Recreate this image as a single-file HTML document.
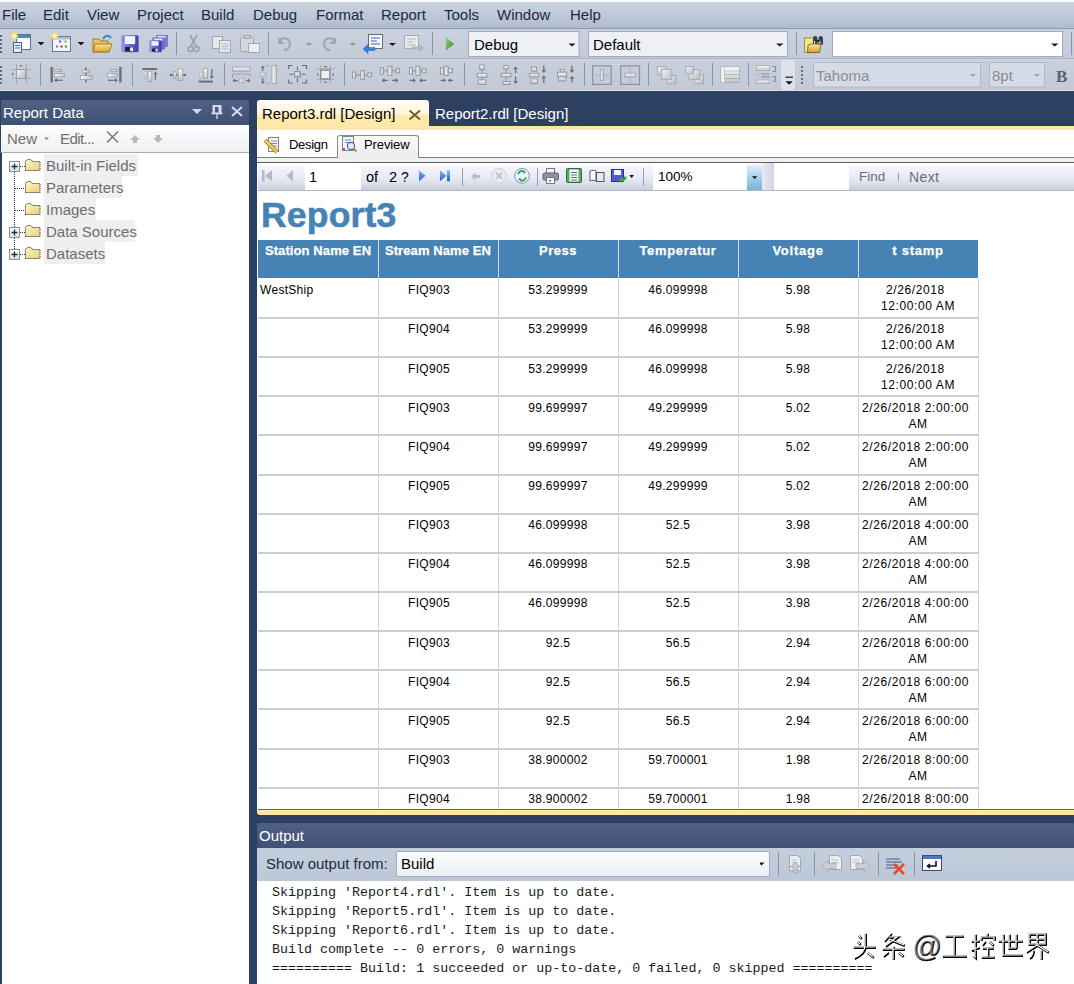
<!DOCTYPE html>
<html><head><meta charset="utf-8">
<style>
*{margin:0;padding:0;box-sizing:border-box}
html,body{width:1074px;height:984px;overflow:hidden}
body{position:relative;background:#2e4062;font-family:"Liberation Sans",sans-serif;font-size:15px;color:#1e2a3c}
.a{position:absolute}
.t{position:absolute;white-space:nowrap;line-height:1}
#menubar{left:0;top:0;width:1074px;height:29px;background:linear-gradient(#fbfcfd 0,#fbfcfd 1.8px,#c9ced6 2px,#cad3df 3px,#c0c9d8 15px,#b0bbd0 27.8px,#8f9aae 28px,#8f9aae 29px)}
#tb1{left:0;top:29px;width:1074px;height:30px;background:linear-gradient(#c6d0df 0,#c9d1de 3px,#c3cbd9 100%);border-bottom:1px solid #a9b3c4}
#tb2{left:0;top:59px;width:1074px;height:32px;background:linear-gradient(#d3d9e4 0,#c9d0dc 2px,#c2cad8 100%);border-bottom:1px solid #d9dee7}
.ptitle{background:linear-gradient(#4f6185,#3f5074);border-radius:2px 2px 0 0;color:#fff}
/* doc */
#tab1{left:257px;top:100px;width:172px;height:30px;border-radius:3px 3px 0 0;background:linear-gradient(#fffdf6 0,#fff6da 14px,#ffe9ab 15px,#ffe8a6 30px)}
#band{left:257px;top:126px;width:817px;height:4.7px;background:#ffe8a6}
#docbody{left:257px;top:130px;width:817px;height:680px;background:#fff;overflow:hidden}
#surf{left:258px;top:191px;width:816px;height:619px;background:#fff}
#clip{left:0;top:0;width:1074px;height:810px;overflow:hidden}
.hl{position:absolute;left:258px;width:721px;height:2px;background:#cdcdcd}
.vl{position:absolute;top:278px;width:1px;height:540px;background:#d3d3d3}
.c{position:absolute;width:120px;text-align:center;font-size:12px;line-height:16px;letter-spacing:0.3px;color:#000;white-space:nowrap}
.hd{position:absolute;top:242.5px;-webkit-text-stroke:0.25px #fff;width:120px;text-align:center;font:bold 13px "Liberation Sans";line-height:16px;color:#fff;white-space:nowrap}
#band2{left:257px;top:810px;width:817px;height:5px;background:#ffe8a6;border-radius:0 0 0 3px}
/* output */
#otitle{left:257px;top:823px;width:817px;height:25px}
#otool{left:257px;top:848px;width:817px;height:33px;background:linear-gradient(#c4cedc,#bcc7d8)}
#otext{left:257px;top:881px;width:817px;height:103px;background:#fff}
.mono{position:absolute;left:272px;font:13.35px "Liberation Mono",monospace;line-height:19.05px;white-space:pre;color:#1a1a1a}
</style></head><body>
<div id="menubar" class="a">
  <span class="t" style="left:2px;top:7px">File</span>
  <span class="t" style="left:43px;top:7px">Edit</span>
  <span class="t" style="left:87px;top:7px">View</span>
  <span class="t" style="left:137px;top:7px">Project</span>
  <span class="t" style="left:201px;top:7px">Build</span>
  <span class="t" style="left:253px;top:7px">Debug</span>
  <span class="t" style="left:316px;top:7px">Format</span>
  <span class="t" style="left:381px;top:7px">Report</span>
  <span class="t" style="left:444px;top:7px">Tools</span>
  <span class="t" style="left:497px;top:7px">Window</span>
  <span class="t" style="left:570px;top:7px">Help</span>
</div>
<div id="tb1" class="a"></div>
<div id="tb2" class="a"></div>
<svg class="a" style="left:0;top:28px" width="1074" height="31" viewBox="0 28 1074 31">
 <defs>
  <linearGradient id="gg" x1="0" y1="0" x2="0" y2="1"><stop offset="0" stop-color="#e4e4e4"/><stop offset="1" stop-color="#a9a9a9"/></linearGradient>
  <linearGradient id="flp" x1="0" y1="0" x2="1" y2="0"><stop offset="0" stop-color="#9a9aea"/><stop offset=".5" stop-color="#6262cc"/><stop offset="1" stop-color="#40409e"/></linearGradient>
  <linearGradient id="fold2" x1="0" y1="0" x2="0" y2="1"><stop offset="0" stop-color="#fbe59a"/><stop offset="1" stop-color="#d9a22c"/></linearGradient>
  <linearGradient id="play" x1="0" y1="0" x2="1" y2="1"><stop offset="0" stop-color="#8fd27a"/><stop offset="1" stop-color="#2f8a2a"/></linearGradient>
 </defs>
 <g fill="#5e6a80"><rect x="0" y="35" width="2" height="2"/><rect x="0" y="39" width="2" height="2"/><rect x="0" y="43" width="2" height="2"/><rect x="0" y="47" width="2" height="2"/><rect x="0" y="51" width="2" height="2"/></g>
 <!-- new project -->
 <rect x="16.5" y="34.5" width="14" height="15" fill="#fbfcfe" stroke="#5a6f93"/>
 <rect x="17" y="35" width="13" height="3" fill="#4e86d6"/>
 <rect x="13.5" y="42.5" width="8" height="10" fill="#e3ecf8" stroke="#4a5f86"/>
 <path d="M15 45.5h5M15 48h5" stroke="#3f6fc0" stroke-width="1.2"/>
 <path d="M14.5 32v8M10.5 36h8M11.7 33.2l5.6 5.6M17.3 33.2l-5.6 5.6" stroke="#ffe35a" stroke-width="1.3"/>
 <circle cx="14.5" cy="36" r="2" fill="#fff6b0"/>
 <path d="M37.5 42h7l-3.5 3.5z" fill="#1a1a1a"/>
 <!-- add item -->
 <rect x="52.5" y="36.5" width="18" height="15" fill="#f4f6fa" stroke="#6a7794"/>
 <rect x="53" y="37" width="17" height="2.5" fill="#a9bfe0"/>
 <circle cx="60" cy="41.5" r="1.2" fill="#4a78c8"/><circle cx="65.5" cy="41.5" r="1.2" fill="#e39845"/>
 <circle cx="57" cy="46.5" r="1.2" fill="#4a9ad8"/><circle cx="61.5" cy="46.5" r="1.2" fill="#d84a4a"/><circle cx="66" cy="46.5" r="1.2" fill="#3aa84a"/>
 <path d="M54.5 32v8M50.5 36h8M51.7 33.2l5.6 5.6M57.3 33.2l-5.6 5.6" stroke="#ffe35a" stroke-width="1.3"/>
 <circle cx="54.5" cy="36" r="2" fill="#fff6b0"/>
 <path d="M77.5 42h7l-3.5 3.5z" fill="#1a1a1a"/>
 <!-- open -->
 <path d="M93 39h6l2 2h7v11h-15z" fill="#e8c563" stroke="#9c7a2a"/>
 <path d="M95 44h17l-3 8h-16z" fill="url(#fold2)" stroke="#a17d25"/>
 <path d="M103 39c2-4 6-4 8-1" stroke="#4a78c8" stroke-width="2" fill="none"/>
 <!-- save -->
 <rect x="121.2" y="35.2" width="17.4" height="17.1" rx="1.5" fill="url(#flp)"/>
 <rect x="124.8" y="36.1" width="10.4" height="8" fill="#f2f5fc"/>
 <rect x="125" y="47" width="6" height="4.5" fill="#1e1e50"/><rect x="130" y="47.5" width="3" height="3.5" fill="#e8e8f0"/>
 <!-- save all -->
 <rect x="156" y="35" width="12" height="12" rx="1" fill="#7a7ad6"/>
 <rect x="157.5" y="36" width="8" height="2.5" fill="#e4e8f8"/>
 <rect x="152.5" y="37.5" width="12.5" height="12" rx="1" fill="#6c6cd0"/>
 <rect x="154" y="38.5" width="8.5" height="2.5" fill="#e4e8f8"/>
 <rect x="149.2" y="40.2" width="12.6" height="12.1" rx="1" fill="url(#flp)"/>
 <rect x="151.5" y="41.2" width="7" height="4.5" fill="#f2f5fc"/>
 <rect x="152" y="48.5" width="4" height="3" fill="#1e1e50"/><rect x="155.5" y="48.8" width="2" height="2.5" fill="#e8e8f0"/>
 <path d="M176.5 32v23" stroke="#8a94a6"/>
 <!-- cut -->
 <path d="M190 35l6 11M197 35l-6 11" stroke="#9aa0a8" stroke-width="1.6"/>
 <circle cx="190.5" cy="49" r="2.5" fill="none" stroke="#9aa0a8" stroke-width="1.4"/><circle cx="196.5" cy="49" r="2.5" fill="none" stroke="#9aa0a8" stroke-width="1.4"/>
 <!-- copy -->
 <rect x="212.5" y="36.5" width="10" height="12" fill="#e6e8ec" stroke="#a4a8ae"/>
 <rect x="219.5" y="40.5" width="11" height="12" fill="#e6e8ec" stroke="#a4a8ae"/>
 <path d="M221.5 44h7M221.5 46.5h7M221.5 49h7" stroke="#b4b8be"/>
 <!-- paste -->
 <rect x="240.5" y="37.5" width="13" height="14" rx="1" fill="#d4d7dc" stroke="#a4a8ae"/>
 <rect x="244" y="35.5" width="6" height="3" fill="#c8cbd0" stroke="#a4a8ae"/>
 <rect x="248.5" y="43.5" width="11" height="9" fill="#eceef1" stroke="#a4a8ae"/>
 <path d="M268.5 32v23" stroke="#8a94a6"/>
 <!-- undo -->
 <path d="M280 40c5-4 10-1 10 4s-4 6-6 6" stroke="#a2a8b0" stroke-width="2.2" fill="none"/>
 <path d="M278 37v7h7z" fill="#a2a8b0"/>
 <path d="M305.5 43h6.5l-3.25 3z" fill="#8f96a3"/>
 <!-- redo -->
 <path d="M334 40c-5-4-10-1-10 4s4 6 6 6" stroke="#a2a8b0" stroke-width="2.2" fill="none"/>
 <path d="M336 37v7h-7z" fill="#a2a8b0"/>
 <path d="M349.5 43h6.5l-3.25 3z" fill="#8f96a3"/>
 <!-- nav back -->
 <rect x="368.5" y="34.5" width="14" height="14" fill="#f8f8fa" stroke="#6a6a6a"/>
 <path d="M371 38h9M371 41h6M371 44h9" stroke="#3a5fc8" stroke-width="1.2"/>
 <path d="M363 49l5-4.5v3h7v3h-7v3z" fill="#3a7ee0" stroke="#2a5fb0" stroke-width=".5"/>
 <path d="M389 43h7l-3.5 3z" fill="#1a1a1a"/>
 <!-- nav fwd -->
 <rect x="404.5" y="35.5" width="14" height="13" fill="#e9eaec" stroke="#a8acb2"/>
 <path d="M407 39h9M407 42h6M407 45h9" stroke="#b5b9bf" stroke-width="1.2"/>
 <path d="M424 48l-5-4.5v3h-7v3h7v3z" fill="#b2b6bc"/>
 <path d="M432.5 32v23" stroke="#8a94a6"/>
 <path d="M446 37.2l8.2 6.7-8.2 6.7z" fill="url(#play)"/>
 <!-- combos -->
 <rect x="468.5" y="31.5" width="110.5" height="25" fill="#eff1f7" stroke="#a3abbb"/>
 <path d="M568.5 43.6h7l-3.5 3z" fill="#1a1a1a"/>
 <rect x="588.5" y="31.5" width="199" height="25" fill="#eef0f6" stroke="#a3abbb"/>
 <path d="M776 43.6h7.5l-3.75 3z" fill="#1a1a1a"/>
 <path d="M796.5 32v23" stroke="#8a94a6"/>
 <!-- find in files -->
 <rect x="804.5" y="38" width="12" height="14.5" fill="#f6e68a" stroke="#8c7a3a" stroke-width=".8"/>
 <path d="M808 45l3-1h10l-1.5 8.5h-12z" fill="url(#fold2)" stroke="#6a5a20" stroke-width=".8"/>
 <path d="M813 38.5c0-2 1.5-2.5 2.5-2.5s2 1 2 3v5h-4.5z M818.5 38.5c0-2 1.5-2.5 2.5-2.5s2 1 2 3v5.5h-4.5z" fill="#3a4048"/>
 <rect x="815.5" y="40" width="4" height="2" fill="#2a2e34"/>
 <path d="M814.5 41v3M820 41v3" stroke="#dfe6ee" stroke-width="1"/>
 <rect x="832.5" y="31.5" width="230" height="25" fill="#fff" stroke="#a3abbb"/>
 <path d="M1051 43.6h7.5l-3.75 3z" fill="#1a1a1a"/>
 <path d="M1071.5 32v23" stroke="#8a94a6"/>
</svg>
<svg class="a" style="left:0;top:59px" width="1074" height="32" viewBox="0 59 1074 32">
 <defs>
  <linearGradient id="gb" x1="0" y1="0" x2="1" y2="1"><stop offset="0" stop-color="#f6f6f6"/><stop offset="1" stop-color="#b9b9b9"/></linearGradient>
  <linearGradient id="gh" x1="0" y1="0" x2="1" y2="0"><stop offset="0" stop-color="#fafafa"/><stop offset="1" stop-color="#c4c4c4"/></linearGradient>
  <linearGradient id="gv" x1="0" y1="0" x2="0" y2="1"><stop offset="0" stop-color="#fafafa"/><stop offset="1" stop-color="#c4c4c4"/></linearGradient>
 </defs>
 <rect x="781" y="60" width="14" height="30" rx="3" fill="#dde2ea"/>
 <g fill="#5e6a80"><rect x="0" y="66" width="2" height="2"/><rect x="0" y="70" width="2" height="2"/><rect x="0" y="74" width="2" height="2"/><rect x="0" y="78" width="2" height="2"/><rect x="0" y="82" width="2" height="2"/></g>
 <g fill="#5e6a80"><rect x="801" y="66" width="2" height="2"/><rect x="801" y="70" width="2" height="2"/><rect x="801" y="74" width="2" height="2"/><rect x="801" y="78" width="2" height="2"/><rect x="801" y="82" width="2" height="2"/></g>
 <g stroke="#8a94a6"><path d="M40.5 63v23M132.5 63v23M224.5 63v23M344.5 63v23M464.5 63v23M584.5 63v23M648.5 63v23M712.5 63v23M748.5 63v23"/></g>
 <!-- size to grid (left) -->
 <g stroke="#a4aab4" fill="none"><path d="M12 69.5h19M12 78.5h19M16.5 64v20M26.5 64v20"/></g>
 <rect x="16.5" y="69.5" width="9" height="9" fill="url(#gb)" stroke="#9aa0aa"/>
 <path d="M19 65h4l-2 2z M12 72l2 2-2 2z" fill="#7e8490"/>
 <!-- align lefts -->
 <rect x="50.5" y="67" width="2.4" height="15.5" fill="#6a707c"/>
 <rect x="54.5" y="69.5" width="7" height="2" fill="url(#gh)" stroke="#9aa0aa" stroke-width=".8"/>
 <rect x="54.5" y="73.5" width="10" height="3.4" fill="url(#gh)" stroke="#9aa0aa" stroke-width=".8"/>
 <path d="M55 80.3h8" stroke="#6a707c" stroke-width="1.2"/><path d="M54 80.3l3-2v4z" fill="#6a707c"/>
 <!-- align centers -->
 <path d="M85.8 67.5v15" stroke="#6a707c" stroke-width="1.6"/>
 <rect x="82.5" y="70.2" width="7" height="2.6" fill="url(#gh)" stroke="#9aa0aa" stroke-width=".8"/>
 <rect x="80.5" y="75.4" width="11.5" height="4" fill="url(#gh)" stroke="#9aa0aa" stroke-width=".8"/>
 <!-- align rights -->
 <rect x="119.2" y="67" width="2.4" height="15.5" fill="#6a707c"/>
 <rect x="110.5" y="69.5" width="7" height="2" fill="url(#gh)" stroke="#9aa0aa" stroke-width=".8"/>
 <rect x="107.5" y="73.5" width="10" height="3.4" fill="url(#gh)" stroke="#9aa0aa" stroke-width=".8"/>
 <path d="M108 80.3h8" stroke="#6a707c" stroke-width="1.2"/><path d="M118 80.3l-3-2v4z" fill="#6a707c"/>
 <!-- align tops -->
 <rect x="142.5" y="68" width="14.5" height="2" fill="#6a707c"/>
 <rect x="144.2" y="71.7" width="2.2" height="6.7" fill="url(#gv)" stroke="#a8aeb8" stroke-width=".6"/>
 <rect x="148" y="71.7" width="3.8" height="10" fill="url(#gv)" stroke="#9aa0aa" stroke-width=".8"/>
 <path d="M155.5 73v7" stroke="#6a707c" stroke-width="1.2"/><path d="M155.5 71.5l-2 3h4z" fill="#6a707c"/>
 <!-- align middles -->
 <path d="M170 75h16" stroke="#6a707c" stroke-width="1.4"/>
 <rect x="173.4" y="71.7" width="2.6" height="6.7" fill="url(#gv)" stroke="#9aa0aa" stroke-width=".8"/>
 <rect x="178.2" y="69" width="4.5" height="11.6" fill="url(#gv)" stroke="#9aa0aa" stroke-width=".8"/>
 <circle cx="171" cy="75" r="1.2" fill="#6a707c"/><circle cx="184.6" cy="75" r="1.2" fill="#6a707c"/>
 <!-- align bottoms -->
 <rect x="198.7" y="80.6" width="14.2" height="2" fill="#6a707c"/>
 <rect x="199.8" y="72.4" width="2.2" height="6" fill="url(#gv)" stroke="#a8aeb8" stroke-width=".6"/>
 <rect x="203.6" y="68.7" width="3.7" height="9.7" fill="url(#gv)" stroke="#9aa0aa" stroke-width=".8"/>
 <path d="M211.8 69v7" stroke="#6a707c" stroke-width="1.2"/><path d="M211.8 79l-2-3h4z" fill="#6a707c"/>
 <!-- same width -->
 <rect x="232.6" y="67.1" width="17.4" height="4.1" fill="url(#gv)" stroke="#9aa0aa" stroke-width=".8"/>
 <path d="M232.6 77.4v-3.4h17.4v3.4" stroke="#7a808c" stroke-dasharray="1 1" fill="none"/>
 <rect x="239.3" y="78.4" width="5" height="4.6" fill="url(#gb)" stroke="#a0a6b0" stroke-width=".6"/>
 <path d="M233 80.6h5M246 80.6h4" stroke="#6a707c" stroke-width="1.2"/><path d="M232.5 80.6l2.5-2v4zM250.5 80.6l-2.5-2v4z" fill="#6a707c"/>
 <!-- same height -->
 <rect x="272" y="65.6" width="4.7" height="17.9" fill="url(#gh)" stroke="#9aa0aa" stroke-width=".8"/>
 <rect x="260.3" y="72.2" width="5.6" height="4.7" fill="url(#gb)" stroke="#a0a6b0" stroke-width=".6"/>
 <path d="M262.8 67v4M262.8 78v5" stroke="#6a707c" stroke-width="1.2"/><path d="M262.8 65.5l-2 2.5h4zM262.8 84l-2-2.5h4z" fill="#6a707c"/>
 <path d="M266 65.8h4M266 83.3h4" stroke="#7a808c" stroke-dasharray="1 1"/>
 <!-- same size -->
 <path d="M288.5 69v-3.5h4M302 65.5h4.5v3.5M288.5 79.5v3.5h4M302 83h4.5v-3.5" stroke="#6a707c" stroke-width="1.2" fill="none"/>
 <rect x="294.6" y="71.7" width="5.6" height="5.2" fill="url(#gb)" stroke="#7a808c" stroke-width=".9"/>
 <path d="M297.4 66.5v4M297.4 78v4.5M289.5 74.3h4M301.5 74.3h4" stroke="#6a707c" stroke-width="1.1"/>
 <!-- center in grid -->
 <g stroke="#a4aab4" fill="none"><path d="M316.6 68.7h18M316.6 79.4h18M320.7 65v18.5M330.4 65v18.5"/></g>
 <rect x="320.7" y="70.2" width="9.2" height="8.7" fill="#f0f0f0" stroke="#8a9098" stroke-width="1.4"/>
 <path d="M323.5 66h4l-2 2z M317 72.5l2 2-2 2z M334 72.5l-2 2 2 2z M323.5 83h4l-2-2z" fill="#7e8490"/>
 <!-- horizontal spacing -->
 <g fill="url(#gh)" stroke="#8e949e" stroke-width=".9">
  <rect x="352.6" y="72" width="3.1" height="6"/><rect x="360.8" y="70.7" width="3.6" height="8.7"/><rect x="368" y="72.8" width="3.6" height="4.1"/>
  <rect x="380.3" y="67.6" width="3" height="6.6"/><rect x="388" y="66.2" width="4" height="9.3"/><rect x="396.2" y="68.6" width="3.5" height="4.2"/>
  <rect x="409.5" y="67.6" width="3" height="6.6"/><rect x="416" y="66.2" width="4" height="9.3"/><rect x="422.3" y="68.6" width="3.7" height="4.2"/>
  <rect x="440.5" y="67.6" width="3" height="6.6"/><rect x="444.2" y="66.2" width="4" height="9.3"/><rect x="448.6" y="68.6" width="3.7" height="4.2"/>
 </g>
 <path d="M355.7 75h5M364.4 75h3.6M383.3 70.8h4.7M392 70.8h4.2M412.5 70.8h3.5M420 70.8h2.3" stroke="#8e949e"/>
 <g stroke="#6a707c" stroke-width="1.3">
  <path d="M382 80.4h6M392 80.4h6M409.5 80.4h5M420.5 80.4h5.5M440.5 80.4h4.5M448.5 80.4h4.5"/>
 </g>
 <g fill="#6a707c">
  <path d="M381.5 80.4l3-2.4v4.8zM398.5 80.4l-3-2.4v4.8zM416 80.4l-3-2.4v4.8zM419 80.4l3-2.4v4.8zM446 80.4l-2.6-2.2v4.4zM447.8 80.4l2.6-2.2v4.4z"/>
 </g>
 <!-- vertical spacing -->
 <g fill="url(#gv)" stroke="#8e949e" stroke-width=".9">
  <rect x="479.7" y="65" width="4.6" height="4.7"/><rect x="477.2" y="73.3" width="9.7" height="4.1"/><rect x="478.2" y="79.9" width="7.7" height="4.6"/>
  <rect x="503.8" y="65.5" width="4.6" height="3.5"/><rect x="501.2" y="73.3" width="9.8" height="3.6"/><rect x="503" y="81.5" width="7" height="3"/>
  <rect x="531.5" y="67.1" width="5.1" height="4.1"/><rect x="529.4" y="73.3" width="9.2" height="3.6"/><rect x="531" y="78.9" width="6.6" height="4.6"/>
  <rect x="560.2" y="69.7" width="4.1" height="2.5"/><rect x="557.6" y="72.2" width="9.2" height="4.7"/><rect x="558.6" y="76.9" width="7.2" height="4"/>
 </g>
 <path d="M482 69.7v3.6M482 77.4v2.5M506 69v4.3M506 76.9v4.6" stroke="#8e949e"/>
 <g stroke="#6a707c" stroke-width="1.3"><path d="M515.6 68v5M515.6 76.3v6M543.8 65.6v5M543.8 77v6M571.9 65.6v5M571.9 77.5v5"/></g>
 <g fill="#6a707c"><path d="M515.6 66.3l-2.4 3h4.8zM515.6 84l-2.4-3h4.8zM543.8 73l-2.4-3h4.8zM543.8 75.3l-2.4 3h4.8zM571.9 73l-2.4-3h4.8zM571.9 75.8l-2.4 3h4.8z"/></g>
 <!-- center h / v -->
 <rect x="592.7" y="65.9" width="18.5" height="18.5" fill="none" stroke="#8d95a3" stroke-width="1.3"/>
 <path d="M595 75.2h14" stroke="#b0b6c0" stroke-width="1.2"/>
 <rect x="600.3" y="69.8" width="3.3" height="10.6" fill="url(#gh)" stroke="#9aa0aa" stroke-width=".8"/>
 <rect x="620.7" y="65.9" width="18.8" height="18.5" fill="none" stroke="#8d95a3" stroke-width="1.3"/>
 <path d="M630 67.5v16" stroke="#b0b6c0" stroke-width="1.2"/>
 <rect x="624.9" y="73.2" width="10.6" height="3.9" fill="url(#gv)" stroke="#9aa0aa" stroke-width=".8"/>
 <!-- order -->
 <g fill="url(#gb)" stroke="#a0a6b0" stroke-width=".8">
  <rect x="657.3" y="66.5" width="8.9" height="7.8"/><rect x="667.3" y="75.4" width="8.4" height="8.4"/><rect x="661.7" y="69.3" width="10.1" height="10"/>
  <rect x="694.7" y="74.8" width="8.9" height="9"/><rect x="689" y="69.8" width="10.7" height="9.5"/><rect x="685.8" y="66.5" width="7.8" height="7.5"/>
 </g>
 <!-- table -->
 <rect x="720.8" y="66.8" width="18.8" height="15.6" fill="url(#gv)" stroke="#a4aab4" stroke-width=".8"/>
 <path d="M720.8 70.8h18.8M720.8 74.6h18.8M720.8 78.5h18.8M724.5 66.8v15.6M731.5 66.8v4" stroke="#a4aab4" stroke-width=".8"/>
 <rect x="721.3" y="67.3" width="3" height="15" fill="#f4f4f4"/><rect x="725" y="67.3" width="14" height="3.2" fill="#f4f4f4"/>
 <!-- list -->
 <rect x="756.4" y="65.6" width="13.2" height="4.8" fill="url(#gv)" stroke="#a4aab4" stroke-width=".8"/>
 <rect x="756.4" y="80" width="13.2" height="3.6" fill="url(#gv)" stroke="#a4aab4" stroke-width=".8"/>
 <circle cx="758" cy="75.5" r="1.3" fill="#e0e0e0" stroke="#9aa0aa" stroke-width=".6"/>
 <path d="M761.2 74h8.4M761.2 76.8h8.4" stroke="#8e949e" stroke-width="1.2"/>
 <path d="M772.4 66.5h3v5h-3M772.4 76.5h3v5h-3" stroke="#8e949e" stroke-width="1.2" fill="none"/>
 <path d="M785.5 77.2h7.5" stroke="#1a1a1a" stroke-width="1.2"/><path d="M785.3 81.2h7.6l-3.8 3.6z" fill="#1a1a1a"/>
 <rect x="813.5" y="62.5" width="167" height="24.5" fill="#d6dce7" stroke="#b1b9c6"/>
 <path d="M969.5 74h6.5l-3.25 3z" fill="#a0a6b0"/>
 <rect x="989.5" y="62.5" width="55" height="24.5" fill="#d6dce7" stroke="#b1b9c6"/>
 <path d="M1033.5 74h6.5l-3.25 3z" fill="#a0a6b0"/>
 <text x="1056" y="81.5" font-family="Liberation Serif" font-weight="bold" font-size="17" fill="#5c6068">B</text>
</svg>
<span class="t" style="left:816px;top:68px;color:#8a8d92">Tahoma</span>
<span class="t" style="left:992px;top:68px;color:#8a8d92">8pt</span>
<span class="t" style="left:474px;top:37px;color:#000">Debug</span>
<span class="t" style="left:593px;top:37px;color:#000">Default</span>


<!-- Report Data panel -->
<div class="a ptitle" style="left:1px;top:100px;width:248px;height:25px"></div>
<span class="t" style="left:3px;top:105px;color:#fff">Report Data</span>
<div class="a" style="left:1px;top:125px;width:248px;height:28px;background:linear-gradient(#fdfdfe,#eef0f4);border-bottom:1px solid #a9abaf"></div>
<div class="a" style="left:2px;top:153px;width:247px;height:831px;background:#fff"></div>
<svg class="a" style="left:185px;top:98px" width="64" height="30" viewBox="0 0 64 30">
 <path d="M7 11h10l-5 5z" fill="#d3dbe9"/>
 <path d="M27.5 7h9v8h-9z M30 9v6h3.5v-6z" fill="#d3dbe9" fill-rule="evenodd"/>
 <rect x="26.5" y="14.5" width="11" height="1.8" fill="#d3dbe9"/>
 <rect x="31.3" y="16" width="1.4" height="5" fill="#d3dbe9"/>
 <path d="M47 9l10 9M57 9l-10 9" stroke="#d3dbe9" stroke-width="2"/>
</svg>
<span class="t" style="left:7px;top:131px;color:#6f6f6f">New</span>
<svg class="a" style="left:40px;top:130px" width="130" height="18" viewBox="0 0 130 18">
 <path d="M4 7.5h5l-2.5 2.5z" fill="#8a8a8a"/>
 <path d="M67 1.5l11 11M78 1.5l-11 11" stroke="#7a7a7a" stroke-width="1.6"/>
 <path d="M95 5l-5 5h3v3h4v-3h3z" fill="#b8b8b8"/>
 <path d="M118 13l-5-5h3v-3h4v3h3z" fill="#b8b8b8"/>
</svg>
<span class="t" style="left:60px;top:131px;color:#6f6f6f;letter-spacing:-0.6px">Edit...</span>
<!-- tree -->
<div class="a" style="left:44px;top:154px;width:94px;height:22px;background:#efefef"></div>
<div class="a" style="left:44px;top:176px;width:78px;height:22px;background:#efefef"></div>
<div class="a" style="left:44px;top:198px;width:52px;height:22px;background:#efefef"></div>
<div class="a" style="left:44px;top:220px;width:91px;height:22px;background:#efefef"></div>
<div class="a" style="left:44px;top:242px;width:61px;height:22px;background:#efefef"></div>
<svg class="a" style="left:0;top:154px" width="44" height="112" viewBox="0 0 44 112">
 <defs>
  <linearGradient id="fg" x1="0" y1="0" x2="1" y2="1"><stop offset="0" stop-color="#fdf7c8"/><stop offset="1" stop-color="#e6cf7a"/></linearGradient>
  <linearGradient id="pb" x1="0" y1="0" x2="0" y2="1"><stop offset="0" stop-color="#fff"/><stop offset="1" stop-color="#d8dde5"/></linearGradient>
 </defs>
 <g stroke="#333" stroke-width="1" stroke-dasharray="1 1" fill="none">
  <path d="M14.5 18v86"/>
  <path d="M20 12.5h5 M15 34.5h10 M15 56.5h10 M20 78.5h5 M20 100.5h5"/>
 </g>
 <g>
  <rect x="9.5" y="7.5" width="10" height="10" fill="url(#pb)" stroke="#8d9299"/>
  <path d="M11.5 12.5h6M14.5 9.5v6" stroke="#1c2a48" stroke-width="1.3"/>
  <rect x="9.5" y="73.5" width="10" height="10" fill="url(#pb)" stroke="#8d9299"/>
  <path d="M11.5 78.5h6M14.5 75.5v6" stroke="#1c2a48" stroke-width="1.3"/>
  <rect x="9.5" y="95.5" width="10" height="10" fill="url(#pb)" stroke="#8d9299"/>
  <path d="M11.5 100.5h6M14.5 97.5v6" stroke="#1c2a48" stroke-width="1.3"/>
 </g>
 <g id="fold">
  <path d="M25.5 16.5v-9l1.5-2h4l1.5 2h7.5v9z" fill="url(#fg)" stroke="#222" stroke-dasharray="1 1"/>
 </g>
 <use href="#fold" y="22"/><use href="#fold" y="44"/><use href="#fold" y="66"/><use href="#fold" y="88"/>
</svg>
<span class="t" style="left:46px;top:158px;color:#6d6d6d">Built-in Fields</span>
<span class="t" style="left:46px;top:180px;color:#6d6d6d">Parameters</span>
<span class="t" style="left:46px;top:202px;color:#6d6d6d">Images</span>
<span class="t" style="left:46px;top:224px;color:#6d6d6d">Data Sources</span>
<span class="t" style="left:46px;top:246px;color:#6d6d6d">Datasets</span>

<!-- document -->
<div id="tab1" class="a"></div>
<span class="t" style="left:262px;top:106px;color:#000">Report3.rdl [Design]</span>
<span class="t" style="left:435px;top:106px;color:#fff">Report2.rdl [Design]</span>
<svg class="a" style="left:405px;top:105px" width="20" height="20" viewBox="405 105 20 20"><path d="M409.5 110.5l10.5 9M420 110.5l-10.5 9" stroke="#6b5c2e" stroke-width="1.8"/></svg>
<div id="band" class="a"></div>
<div id="docbody" class="a"></div>
<div id="surf" class="a"></div>
<!-- design/preview tabs -->
<div class="a" style="left:257px;top:157px;width:817px;height:1px;background:#7d7d7d"></div>
<div class="a" style="left:257px;top:158px;width:817px;height:4px;background:#f1f1f1"></div>
<div class="a" style="left:337px;top:135px;width:82px;height:23px;border:1px solid #8c8c8c;border-bottom:none;border-radius:3px 3px 0 0;background:linear-gradient(#fbfbfb,#ececec)"></div>
<span class="t" style="left:289px;top:138px;font-size:13px;color:#000;letter-spacing:-0.3px">Design</span>
<span class="t" style="left:364px;top:138px;font-size:13px;color:#000;letter-spacing:-0.1px">Preview</span>
<svg class="a" style="left:260px;top:134px" width="120" height="22" viewBox="260 134 120 22">
 <rect x="268.5" y="137.5" width="10" height="14" fill="#f4f6f8" stroke="#7a8290"/>
 <path d="M271 141h6M271 143.5h6M271 146h6" stroke="#6a8fb8"/>
 <path d="M265 140l12 12" stroke="#a8862a" stroke-width="4"/>
 <path d="M265 140l12 12" stroke="#f1cf5a" stroke-width="2.4"/>
 <rect x="342.5" y="136.5" width="11" height="14" fill="#f4f6f8" stroke="#7a8290"/>
 <path d="M345 140h6M345 142.5h4" stroke="#6a8fb8"/>
 <circle cx="351" cy="146" r="3.6" fill="#dceefa" stroke="#4a6a90" stroke-width="1.2"/>
 <path d="M353.5 148.5l3 3" stroke="#d08a2a" stroke-width="2.2"/>
 <rect x="343" y="148" width="2" height="2" fill="#e04040"/>
</svg>
<!-- report toolbar -->
<div class="a" style="left:257px;top:162px;width:817px;height:1px;background:#5f5f5f"></div>
<div class="a" style="left:258px;top:163px;width:816px;height:27px;border-radius:0 0 0 3px;background:linear-gradient(#fdfdff 0,#f0f1fb 25%,#e8eaf8 55%,#dcdfec 75%,#c9cedb 100%)"></div>
<div class="a" style="left:258px;top:190px;width:816px;height:1px;background:#b2b8c4"></div>
<div class="a" style="left:305px;top:163px;width:56px;height:27px;background:#fff"></div>
<div class="a" style="left:653px;top:163px;width:94px;height:27px;background:#fff"></div>
<div class="a" style="left:747px;top:165px;width:15px;height:25px;background:linear-gradient(#e4f0f8,#a9d0ea 50%,#78b2d8)"></div>
<div class="a" style="left:762px;top:163px;width:12px;height:27px;background:linear-gradient(90deg,#e8ebf4,#cfd4e6)"></div>
<div class="a" style="left:774px;top:163px;width:75px;height:27px;background:#fff"></div>
<span class="t" style="left:309px;top:170px;font-size:14.5px;color:#000">1</span>
<span class="t" style="left:366px;top:170px;font-size:14.5px;color:#000">of</span>
<span class="t" style="left:389px;top:170px;font-size:14.5px;color:#000">2</span>
<span class="t" style="left:401px;top:170px;font-size:14px;color:#000">?</span>
<span class="t" style="left:658px;top:170px;font-size:13.5px;color:#000">100%</span>
<span class="t" style="left:859px;top:170px;font-size:13.5px;color:#6d6d6d">Find</span>
<span class="t" style="left:909px;top:170px;font-size:14px;color:#6d6d6d;letter-spacing:0.4px">Next</span>
<svg class="a" style="left:258px;top:163px" width="816" height="28" viewBox="258 163 816 28">
 <defs>
  <linearGradient id="bl" x1="0" y1="0" x2="0" y2="1"><stop offset="0" stop-color="#8ab8f0"/><stop offset="1" stop-color="#1f5fc8"/></linearGradient>
 </defs>
 <path d="M262 170h2.5v11.5h-2.5z M272 170v11.5l-7-5.75z" fill="#b7bac0"/>
 <path d="M293 170v11.5l-6.6-5.75z" fill="#b7bac0"/>
 <path d="M419 170.3v11l6.5-5.5z" fill="url(#bl)"/>
 <path d="M440 170.3v11l6.5-5.5z" fill="url(#bl)"/><rect x="447" y="170.3" width="3" height="11" fill="url(#bl)"/>
 <path d="M462.5 168v18M537.5 168v18M643.5 168v18M898.5 173v8" stroke="#9a9ea8"/>
 <path d="M471 176.6l4.5-4v2.5h4.7v3h-4.7v2.5z" fill="#b9bcc2"/>
 <circle cx="499" cy="175.8" r="7.4" fill="#ececec" stroke="#cfcfcf"/>
 <path d="M496 172.8l6 6M502 172.8l-6 6" stroke="#c2c2c2" stroke-width="1.8"/>
 <circle cx="522" cy="175.8" r="7.4" fill="#eef4fb" stroke="#6f98c8"/>
 <path d="M518 174c1-3 4-4 6-2.5M526 177.5c-1 3-4 4-6 2.5" stroke="#3aa04a" stroke-width="1.8" fill="none"/>
 <path d="M523 170.5l3 1.5-2.5 2z M521 181l-3-1.5 2.5-2z" fill="#3aa04a"/>
 <rect x="546.5" y="168.5" width="8" height="5" fill="#f6f6f6" stroke="#777"/>
 <rect x="543" y="173" width="15.5" height="7" rx="1.5" fill="#8f949c" stroke="#5c6068"/>
 <rect x="546.5" y="177.5" width="8" height="6" fill="#fff" stroke="#777"/><rect x="549" y="180" width="2" height="1.5" fill="#4a78c8"/>
 <rect x="566.5" y="168.5" width="15" height="14" rx="1" fill="#5aa85a" stroke="#2e6e2e"/>
 <rect x="569.5" y="169.5" width="9" height="12" fill="#fff"/>
 <path d="M571 172.5h6M571 175h6M571 177.5h6M571 180h6" stroke="#4a6fa0"/>
 <path d="M590 171v10c2-1 4-1 6 0v-10c-2-1-4-1-6 0z" fill="#fff" stroke="#555"/>
 <rect x="596.5" y="172.5" width="7.5" height="9" fill="#e6eaf2" stroke="#555"/>
 <rect x="611.5" y="169.5" width="12" height="12" fill="#5a5ad0" stroke="#2d2d8a"/>
 <rect x="614" y="170" width="7" height="5" fill="#f4f4ff"/>
 <path d="M619 180l3 3 5-5-2-2-3 3-1-1z" fill="#2fb02f"/>
 <path d="M629.3 175h4.7l-2.35 3z" fill="#111"/>
 <path d="M752 176.3h5.3l-2.65 2.7z" fill="#111"/>
</svg>

<div id="clip" class="a">
<span class="t" style="left:261px;top:195px;font:bold 35.5px 'Liberation Sans';color:#4682b4;-webkit-text-stroke:0.6px #4682b4;letter-spacing:0.2px">Report3</span>
<div class="a" style="left:258px;top:240px;width:720.3px;height:38px;background:#4682b4"></div>
<div class="a" style="left:378px;top:240px;width:1px;height:38px;background:#c9d9e8"></div>
<div class="a" style="left:498px;top:240px;width:1px;height:38px;background:#c9d9e8"></div>
<div class="a" style="left:618px;top:240px;width:1px;height:38px;background:#c9d9e8"></div>
<div class="a" style="left:738px;top:240px;width:1px;height:38px;background:#c9d9e8"></div>
<div class="a" style="left:858px;top:240px;width:1px;height:38px;background:#c9d9e8"></div>
<div class="hd" style="left:258px;letter-spacing:0.1px">Station Name EN</div>
<div class="hd" style="left:378px;letter-spacing:0.1px">Stream Name EN</div>
<div class="hd" style="left:498px;letter-spacing:0.5px">Press</div>
<div class="hd" style="left:618px;letter-spacing:0.65px">Temperatur</div>
<div class="hd" style="left:738px;letter-spacing:0.75px">Voltage</div>
<div class="hd" style="left:858px;letter-spacing:0.75px">t stamp</div>
<div class="hl" style="top:316.9px"></div>
<div class="hl" style="top:356.1px"></div>
<div class="hl" style="top:395.2px"></div>
<div class="hl" style="top:434.4px"></div>
<div class="hl" style="top:473.5px"></div>
<div class="hl" style="top:512.6px"></div>
<div class="hl" style="top:551.8px"></div>
<div class="hl" style="top:590.9px"></div>
<div class="hl" style="top:630.1px"></div>
<div class="hl" style="top:669.2px"></div>
<div class="hl" style="top:708.3px"></div>
<div class="hl" style="top:747.5px"></div>
<div class="hl" style="top:786.6px"></div>
<div class="hl" style="top:825.8px"></div>
<div class="vl" style="left:378px"></div>
<div class="vl" style="left:498px"></div>
<div class="vl" style="left:618px"></div>
<div class="vl" style="left:738px"></div>
<div class="vl" style="left:858px"></div>
<div class="vl" style="left:978px"></div>
<div class="c" style="top:282.3px;left:260px;width:auto;text-align:left">WestShip</div>
<div class="c" style="top:282.3px;left:378px;width:102px">FIQ903</div>
<div class="c" style="top:282.3px;left:498px">53.299999</div>
<div class="c" style="top:282.3px;left:618px">46.099998</div>
<div class="c" style="top:282.3px;left:738px">5.98</div>
<div class="c" style="top:282.3px;left:858px;letter-spacing:0.6px">2/26/2018<span style="display:inline-block;width:5px"></span><br>12:00:00 AM</div>
<div class="c" style="top:321.4px;left:378px;width:102px">FIQ904</div>
<div class="c" style="top:321.4px;left:498px">53.299999</div>
<div class="c" style="top:321.4px;left:618px">46.099998</div>
<div class="c" style="top:321.4px;left:738px">5.98</div>
<div class="c" style="top:321.4px;left:858px;letter-spacing:0.6px">2/26/2018<span style="display:inline-block;width:5px"></span><br>12:00:00 AM</div>
<div class="c" style="top:360.6px;left:378px;width:102px">FIQ905</div>
<div class="c" style="top:360.6px;left:498px">53.299999</div>
<div class="c" style="top:360.6px;left:618px">46.099998</div>
<div class="c" style="top:360.6px;left:738px">5.98</div>
<div class="c" style="top:360.6px;left:858px;letter-spacing:0.6px">2/26/2018<span style="display:inline-block;width:5px"></span><br>12:00:00 AM</div>
<div class="c" style="top:399.7px;left:378px;width:102px">FIQ903</div>
<div class="c" style="top:399.7px;left:498px">99.699997</div>
<div class="c" style="top:399.7px;left:618px">49.299999</div>
<div class="c" style="top:399.7px;left:738px">5.02</div>
<div class="c" style="top:399.7px;left:858px;letter-spacing:0.6px">2/26/2018 2:00:00<span style="display:inline-block;width:5px"></span><br>AM</div>
<div class="c" style="top:438.9px;left:378px;width:102px">FIQ904</div>
<div class="c" style="top:438.9px;left:498px">99.699997</div>
<div class="c" style="top:438.9px;left:618px">49.299999</div>
<div class="c" style="top:438.9px;left:738px">5.02</div>
<div class="c" style="top:438.9px;left:858px;letter-spacing:0.6px">2/26/2018 2:00:00<span style="display:inline-block;width:5px"></span><br>AM</div>
<div class="c" style="top:478.0px;left:378px;width:102px">FIQ905</div>
<div class="c" style="top:478.0px;left:498px">99.699997</div>
<div class="c" style="top:478.0px;left:618px">49.299999</div>
<div class="c" style="top:478.0px;left:738px">5.02</div>
<div class="c" style="top:478.0px;left:858px;letter-spacing:0.6px">2/26/2018 2:00:00<span style="display:inline-block;width:5px"></span><br>AM</div>
<div class="c" style="top:517.1px;left:378px;width:102px">FIQ903</div>
<div class="c" style="top:517.1px;left:498px">46.099998</div>
<div class="c" style="top:517.1px;left:618px">52.5</div>
<div class="c" style="top:517.1px;left:738px">3.98</div>
<div class="c" style="top:517.1px;left:858px;letter-spacing:0.6px">2/26/2018 4:00:00<span style="display:inline-block;width:5px"></span><br>AM</div>
<div class="c" style="top:556.3px;left:378px;width:102px">FIQ904</div>
<div class="c" style="top:556.3px;left:498px">46.099998</div>
<div class="c" style="top:556.3px;left:618px">52.5</div>
<div class="c" style="top:556.3px;left:738px">3.98</div>
<div class="c" style="top:556.3px;left:858px;letter-spacing:0.6px">2/26/2018 4:00:00<span style="display:inline-block;width:5px"></span><br>AM</div>
<div class="c" style="top:595.4px;left:378px;width:102px">FIQ905</div>
<div class="c" style="top:595.4px;left:498px">46.099998</div>
<div class="c" style="top:595.4px;left:618px">52.5</div>
<div class="c" style="top:595.4px;left:738px">3.98</div>
<div class="c" style="top:595.4px;left:858px;letter-spacing:0.6px">2/26/2018 4:00:00<span style="display:inline-block;width:5px"></span><br>AM</div>
<div class="c" style="top:634.6px;left:378px;width:102px">FIQ903</div>
<div class="c" style="top:634.6px;left:498px">92.5</div>
<div class="c" style="top:634.6px;left:618px">56.5</div>
<div class="c" style="top:634.6px;left:738px">2.94</div>
<div class="c" style="top:634.6px;left:858px;letter-spacing:0.6px">2/26/2018 6:00:00<span style="display:inline-block;width:5px"></span><br>AM</div>
<div class="c" style="top:673.7px;left:378px;width:102px">FIQ904</div>
<div class="c" style="top:673.7px;left:498px">92.5</div>
<div class="c" style="top:673.7px;left:618px">56.5</div>
<div class="c" style="top:673.7px;left:738px">2.94</div>
<div class="c" style="top:673.7px;left:858px;letter-spacing:0.6px">2/26/2018 6:00:00<span style="display:inline-block;width:5px"></span><br>AM</div>
<div class="c" style="top:712.8px;left:378px;width:102px">FIQ905</div>
<div class="c" style="top:712.8px;left:498px">92.5</div>
<div class="c" style="top:712.8px;left:618px">56.5</div>
<div class="c" style="top:712.8px;left:738px">2.94</div>
<div class="c" style="top:712.8px;left:858px;letter-spacing:0.6px">2/26/2018 6:00:00<span style="display:inline-block;width:5px"></span><br>AM</div>
<div class="c" style="top:752.0px;left:378px;width:102px">FIQ903</div>
<div class="c" style="top:752.0px;left:498px">38.900002</div>
<div class="c" style="top:752.0px;left:618px">59.700001</div>
<div class="c" style="top:752.0px;left:738px">1.98</div>
<div class="c" style="top:752.0px;left:858px;letter-spacing:0.6px">2/26/2018 8:00:00<span style="display:inline-block;width:5px"></span><br>AM</div>
<div class="c" style="top:791.1px;left:378px;width:102px">FIQ904</div>
<div class="c" style="top:791.1px;left:498px">38.900002</div>
<div class="c" style="top:791.1px;left:618px">59.700001</div>
<div class="c" style="top:791.1px;left:738px">1.98</div>
<div class="c" style="top:791.1px;left:858px;letter-spacing:0.6px">2/26/2018 8:00:00<span style="display:inline-block;width:5px"></span><br>AM</div>

</div>
<div id="band2" class="a"></div>
<div class="a" style="left:258px;top:809px;width:816px;height:1px;background:#6b6450"></div>

<!-- output -->
<div id="otitle" class="a ptitle"></div>
<span class="t" style="left:259px;top:828px;color:#fff">Output</span>
<div id="otool" class="a"></div>
<span class="t" style="left:266px;top:856px;color:#1e2a3c">Show output from:</span>
<div class="a" style="left:396px;top:851px;width:374px;height:26px;background:linear-gradient(#fcfcfd,#eef0f5);border:1px solid #a3abbb;border-radius:2px"></div>
<span class="t" style="left:401px;top:856px;color:#000">Build</span>
<svg class="a" style="left:760px;top:848px" width="200" height="33" viewBox="760 848 200 33">
 <path d="M758.5 862.6h6l-3 3z" fill="#1a1a1a"/>
 <path d="M778.5 852v24M814.5 852v24M878.5 852v24M914.5 852v24" stroke="#8a94a6"/>
 <path d="M789.5 855.5h8l3 3v12h-11z" fill="#eceef1" stroke="#a4a8b0"/>
 <path d="M791.5 860h6M791.5 862.5h6" stroke="#c0c4ca"/>
 <path d="M795.3 862l-5 5h3v6h4v-6h3z" fill="#c8cbd0" stroke="#9ea2a8" stroke-width=".7"/>
 <path d="M829.5 855.5h9l3 3v11h-12z" fill="#eceef1" stroke="#a4a8b0"/>
 <path d="M831.5 860h7M831.5 862.5h7" stroke="#c0c4ca"/>
 <path d="M822 866l6-5.5v3h8v5h-8v3z" fill="#cbced3" stroke="#a0a4aa" stroke-width=".7"/>
 <path d="M850.5 855.5h9l3 3v11h-12z" fill="#eceef1" stroke="#a4a8b0"/>
 <path d="M852.5 860h7M852.5 862.5h7" stroke="#c0c4ca"/>
 <path d="M870 866l-6-5.5v3h-8v5h8v3z" fill="#cbced3" stroke="#a0a4aa" stroke-width=".7"/>
 <path d="M886 859h14M886 862h16M886 865h12M886 868h12" stroke="#6a7fa8" stroke-width="1.4"/>
 <path d="M894 864l10 10M904 864l-10 10" stroke="#e24a2a" stroke-width="2.6"/>
 <rect x="922.5" y="855.5" width="19" height="15" fill="#fff" stroke="#3a4a6a"/>
 <rect x="923" y="856" width="18" height="3" fill="#4a78c8"/>
 <path d="M936 861v5h-8M930 864l-2.5 2 2.5 2" stroke="#111" stroke-width="1.6" fill="none"/>
</svg>
<div id="otext" class="a"></div>
<div class="mono" style="top:883px">Skipping 'Report4.rdl'. Item is up to date.
Skipping 'Report5.rdl'. Item is up to date.
Skipping 'Report6.rdl'. Item is up to date.
Build complete -- 0 errors, 0 warnings
========== Build: 1 succeeded or up-to-date, 0 failed, 0 skipped ==========</div>
<svg class="a" style="left:850px;top:928px" width="205" height="38" viewBox="850 928 205 38">
 <defs>
 <g id="wm" fill="none">
  <g transform="translate(853,933)">
   <path d="M5 2l3 3M4 8l3 3M12 0v12c0 6-4 10-11 13M0 14h22M14 19l6 5"/>
  </g>
  <g transform="translate(881,933)">
   <path d="M10 0l-7 8M8 4h8l-12 9M8 6l15 6M1 16h22M12 13v13M7 19l-5 4M17 19l5 4"/>
  </g>
  <g transform="translate(942,934)">
   <path d="M3 2h18M12 2v19M0 22h24"/>
  </g>
  <g transform="translate(971,933)">
   <path d="M0 8h8M4 1v23l-2-2M0 17l8-3M16 0v3M10 7v-3h13v3M14 8l-3 4M18 8l4 4M11 15h11M16.5 15v8M10 24h13"/>
  </g>
  <g transform="translate(998,933)">
   <path d="M0 8h24M5 1v21h19M11 1v14h7M18 1v14"/>
  </g>
  <g transform="translate(1025,933)">
   <path d="M4 1h16v10h-16zM12 1v10M4 6h16M12 12l-11 7M12 12l11 7M8 17c0 4-2 7-4 8M16 17v9"/>
  </g>
 </g>
 </defs>
 <use href="#wm" transform="translate(0.8,0.8)" stroke="#000" stroke-width="2.4"/>
 <use href="#wm" stroke="#fff" stroke-width="1.2"/>
 <text x="912.8" y="956.8" font-family="Liberation Sans" font-size="29" fill="#000" stroke="#000" stroke-width="0.5">@</text>
 <text x="912" y="956" font-family="Liberation Sans" font-size="29" fill="#fff" fill-opacity="0.45">@</text>
</svg>
</body></html>
